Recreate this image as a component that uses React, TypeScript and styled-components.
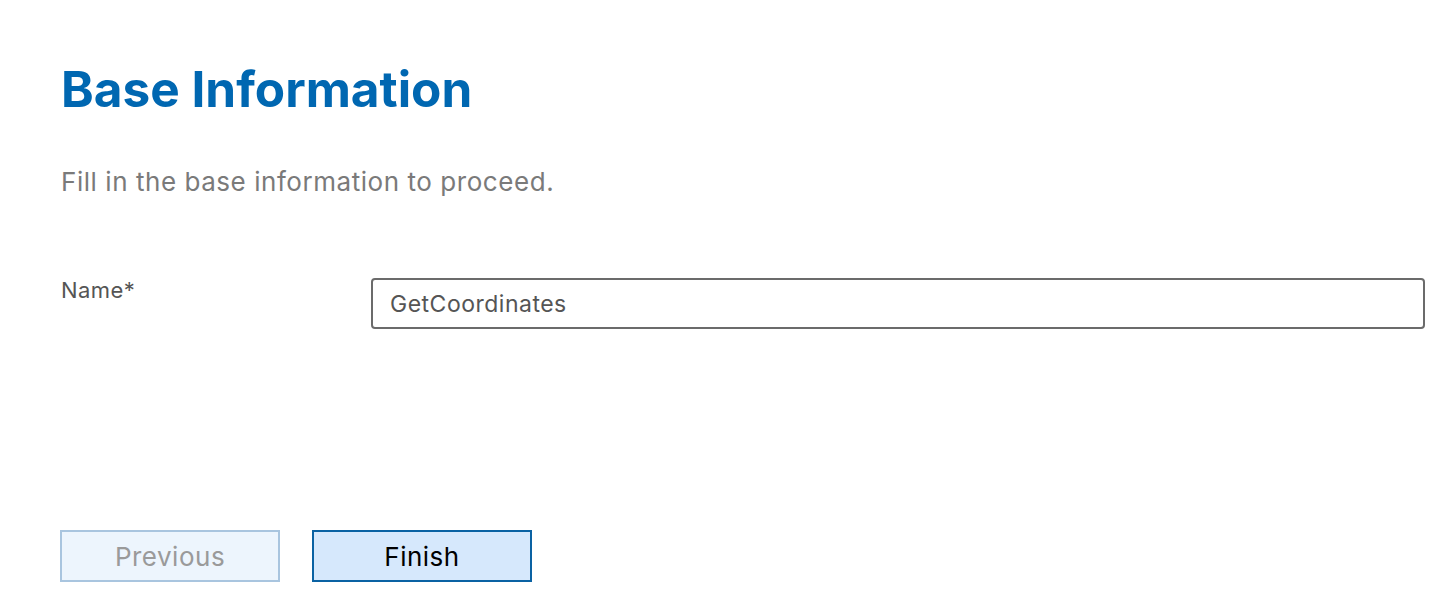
import React from "react";
import styled, { createGlobalStyle } from "styled-components";

const Global = createGlobalStyle`
  html, body { margin: 0; padding: 0; background: #fff; }
  body { font-family: Inter, "Noto Sans", sans-serif; }
  * { box-sizing: border-box; }
`;

const Page = styled.div`
  display: flex;
  flex-direction: column;
  padding: 57px 17px 0 61px;
  width: 1442px;
  height: 612px;
`;

const Title = styled.h1`
  margin: 0;
  font-size: 49.5px;
  font-weight: 700;
  color: #0067b1;
  line-height: 64px;
  letter-spacing: 0;
`;

const Subtitle = styled.p`
  margin: 45px 0 0;
  font-size: 26px;
  letter-spacing: 0.55px;
  line-height: 32px;
  color: #7a7a7a;
`;

const FieldRow = styled.div`
  display: grid;
  grid-template-columns: 310px 1fr;
  align-items: start;
  margin-top: 78px;
`;

const Label = styled.label`
  font-size: 22px;
  letter-spacing: 0.4px;
  line-height: 28px;
  color: #555;
`;

const Input = styled.input`
  height: 51px;
  width: 100%;
  border: 2px solid #6b6b6b;
  border-radius: 4px;
  padding: 0 17px;
  font-family: Inter, "Noto Sans", sans-serif;
  font-size: 23px;
  letter-spacing: 0.5px;
  color: #555;
  margin-top: 2px;
  outline: none;
`;

const Actions = styled.div`
  display: flex;
  gap: 32px;
  margin: 201px 0 0 -1px;
`;

const Button = styled.button<{ $primary?: boolean }>`
  width: 220px;
  height: 52px;
  border: 2px solid ${(p) => (p.$primary ? "#0a62a3" : "#a9c5df")};
  background: ${(p) => (p.$primary ? "#d6e8fc" : "#edf5fd")};
  color: ${(p) => (p.$primary ? "#000" : "#9a9a9a")};
  font-family: Inter, "Noto Sans", sans-serif;
  font-size: 26px;
  letter-spacing: 0.5px;
  border-radius: 0;
  padding: 0;
  cursor: pointer;
`;

export default function App() {
  return (
    <>
      <Global />
      <Page>
        <Title>Base Information</Title>
        <Subtitle>Fill in the base information to proceed.</Subtitle>
        <FieldRow>
          <Label>Name*</Label>
          <Input defaultValue="GetCoordinates" />
        </FieldRow>
        <Actions>
          <Button>Previous</Button>
          <Button $primary>Finish</Button>
        </Actions>
      </Page>
    </>
  );
}
